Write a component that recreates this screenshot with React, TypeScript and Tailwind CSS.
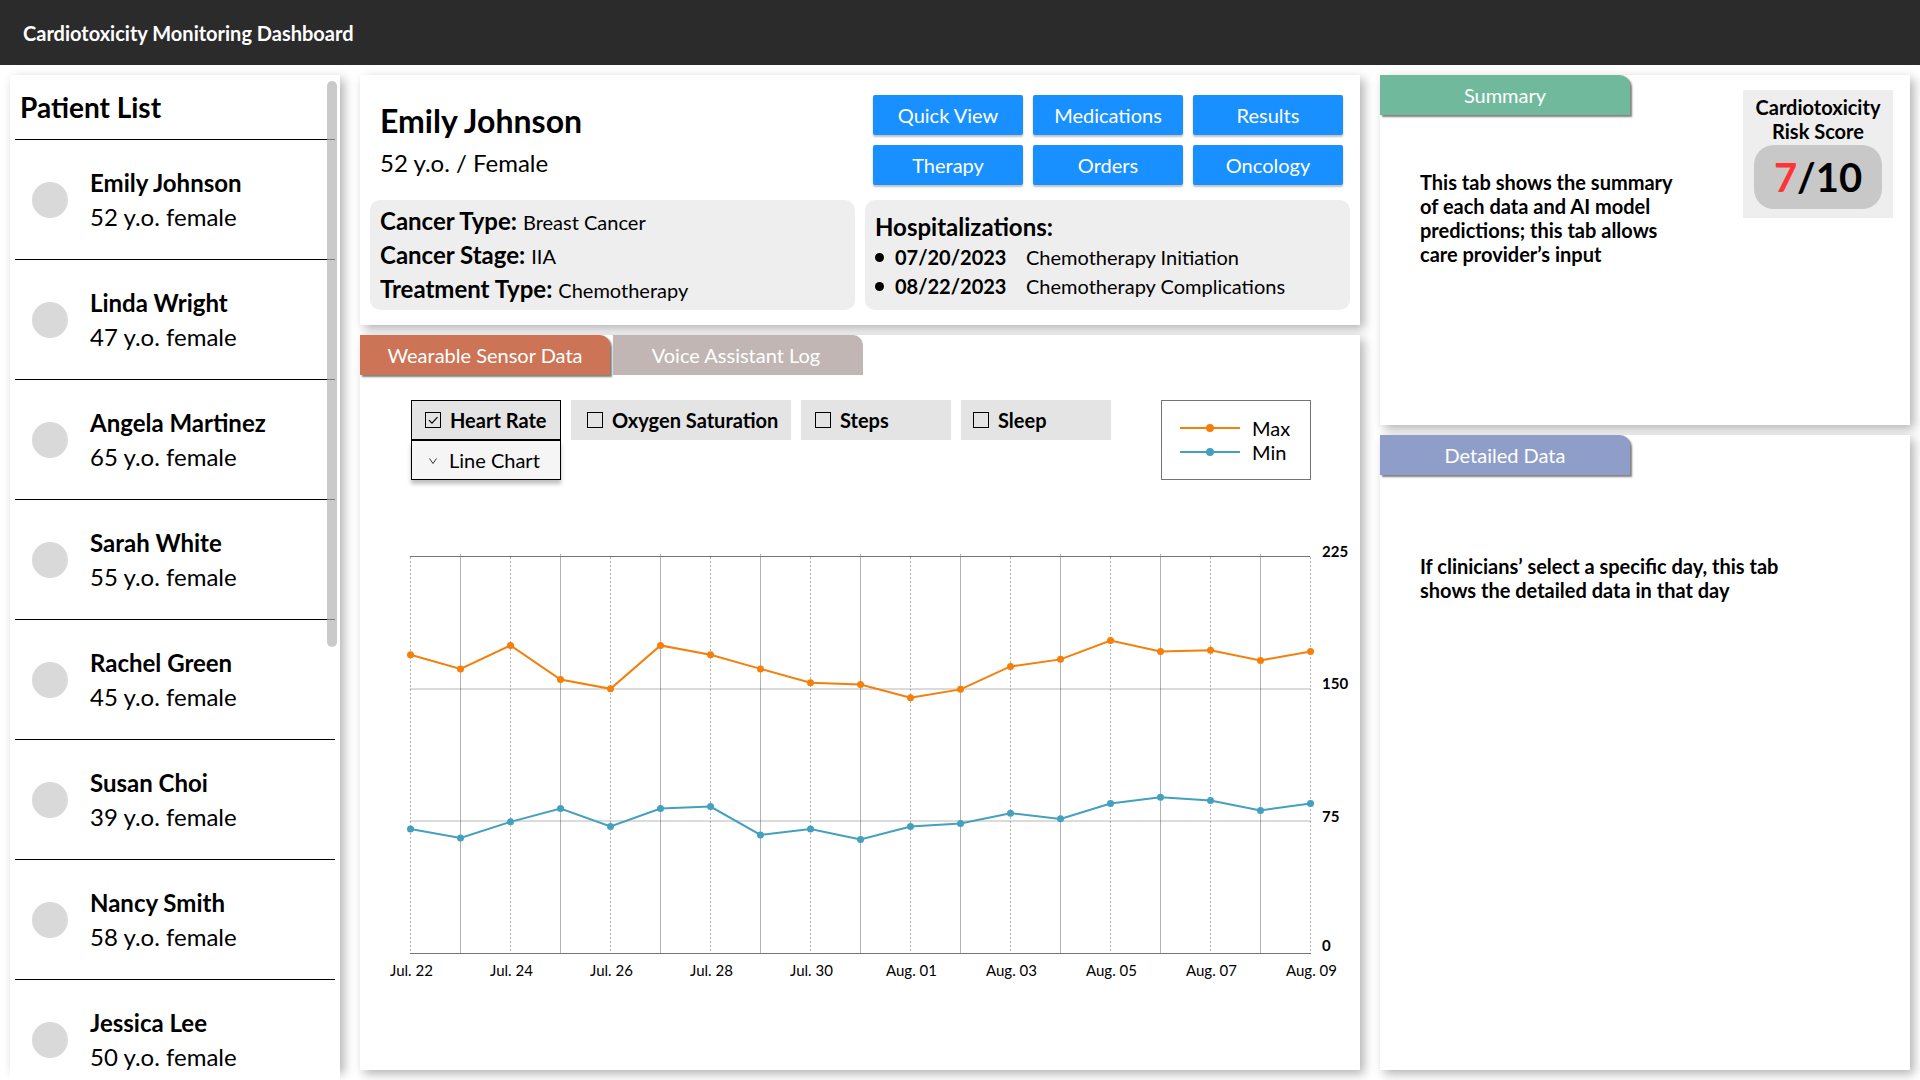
import React, { useState } from 'react';

interface Patient {
  name: string;
  age: number;
}

const patients: Patient[] = [
  { name: 'Emily Johnson', age: 52 },
  { name: 'Linda Wright', age: 47 },
  { name: 'Angela Martinez', age: 65 },
  { name: 'Sarah White', age: 55 },
  { name: 'Rachel Green', age: 45 },
  { name: 'Susan Choi', age: 39 },
  { name: 'Nancy Smith', age: 58 },
  { name: 'Jessica Lee', age: 50 },
];

const actions = ['Quick View', 'Medications', 'Results', 'Therapy', 'Orders', 'Oncology'];

const diagnosis = [
  { label: 'Cancer Type:', value: 'Breast Cancer' },
  { label: 'Cancer Stage:', value: 'IIA' },
  { label: 'Treatment Type:', value: 'Chemotherapy' },
];

const hospitalizations = [
  { date: '07/20/2023', reason: 'Chemotherapy Initiation' },
  { date: '08/22/2023', reason: 'Chemotherapy Complications' },
];

const sensors = [
  { name: 'Heart Rate', width: 'w-[150px] pl-3.5' },
  { name: 'Oxygen Saturation', width: 'w-[220px] pl-4' },
  { name: 'Steps', width: 'w-[150px] pl-3.5' },
  { name: 'Sleep', width: 'w-[150px] pl-3' },
];

const maxRate = [
  169.3, 161.3, 174.6, 155.3, 150, 174.6, 169.3, 161.3, 153.4, 152.5, 144.9, 149.7, 162.7, 166.7,
  177.4, 171.2, 171.8, 166.1, 171.2,
];
const minRate = [
  70.6, 65.5, 74.6, 82.2, 72, 82.2, 83.3, 67.2, 70.6, 64.6, 72, 73.7, 79.5, 76.3, 85, 88.6, 86.7,
  81.1, 85,
];
const days = [
  'Jul. 22', 'Jul. 24', 'Jul. 26', 'Jul. 28', 'Jul. 30',
  'Aug. 01', 'Aug. 03', 'Aug. 05', 'Aug. 07', 'Aug. 09',
];

const panel = 'bg-white shadow-[4px_4px_10px_rgba(0,0,0,0.3)]';
const tab = 'h-10 w-[250px] rounded-tr-[10px] text-xl text-white';
const raised = 'shadow-[2px_2px_2px_rgba(0,0,0,0.5)]';

// chart geometry, in viewBox units
const LEFT = 50.5;
const STEP = 50;
const TOP = 16.5;
const BOTTOM = 413.5;
const toX = (i: number) => LEFT + i * STEP;
const toY = (v: number) => BOTTOM - (v / 225) * (BOTTOM - TOP);

const Series: React.FC<{ values: number[]; color: string }> = ({ values, color }) => (
  <g fill={color}>
    <polyline
      points={values.map((v, i) => `${toX(i)},${toY(v)}`).join(' ')}
      fill="none"
      stroke={color}
      strokeWidth="2"
    />
    {values.map((v, i) => (
      <circle key={i} cx={toX(i)} cy={toY(v)} r="3.5" />
    ))}
  </g>
);

const HeartRateChart: React.FC = () => (
  <svg viewBox="0 0 1000 450" className="mt-[60px] w-full" role="img" aria-label="Heart rate by day">
    {maxRate.map((_, i) => (
      <line
        key={i}
        x1={toX(i)}
        x2={toX(i)}
        y1={i % 2 ? 14 : 17}
        y2="413"
        stroke="#b3b3b3"
        strokeDasharray={i % 2 ? undefined : '2 2'}
      />
    ))}
    <g stroke="#000" strokeOpacity="0.14" strokeWidth="2">
      <line x1="50" x2="951" y1="149" y2="149" />
      <line x1="50" x2="951" y1="281" y2="281" />
    </g>
    <g stroke="#757575">
      <line x1="50" x2="950" y1={TOP} y2={TOP} />
      <line x1="50" x2="951" y1={BOTTOM} y2={BOTTOM} />
    </g>
    <Series values={maxRate} color="#f57f0b" />
    <Series values={minRate} color="#43a0be" />
    <g fontSize="15" fontWeight="700">
      <text x="962" y="17">225</text>
      <text x="962" y="149">150</text>
      <text x="962" y="282">75</text>
      <text x="962" y="411">0</text>
    </g>
    <g fontSize="15" textAnchor="middle">
      {days.map((day, i) => (
        <text key={day} x={51.5 + i * 100} y="436">
          {day}
        </text>
      ))}
    </g>
  </svg>
);

const LegendRow: React.FC<{ label: string; color: string }> = ({ label, color }) => (
  <div className="flex h-6 items-center gap-3">
    <svg width="60" height="8" className="shrink-0">
      <line x1="0" x2="60" y1="4" y2="4" stroke={color} strokeWidth="2" />
      <circle cx="30" cy="4" r="4" fill={color} />
    </svg>
    {label}
  </div>
);

// The list is longer than its card and runs on past the bottom of the window.
const PatientList: React.FC = () => (
  <aside className={`${panel} relative mb-2.5 min-h-0`}>
    <div className="bg-white px-[5px]">
      <h2 className="h-16 pt-[15px] pl-[5px] text-[28px] leading-[34px] font-bold">Patient List</h2>
      <ul>
        {patients.map((p) => (
          <li key={p.name} className="flex h-[120px] items-center gap-[22px] border-t border-black pl-[17px]">
            <span className="size-9 shrink-0 rounded-full bg-[#d9d9d9]" />
            <p className="text-2xl leading-[34px]">
              <span className="block font-bold">{p.name}</span>
              {p.age} y.o. female
            </p>
          </li>
        ))}
      </ul>
    </div>
    <div className="absolute top-1.5 right-[3px] h-[566px] w-2.5 rounded-full bg-[#b5b3b4]/70" />
  </aside>
);

const PatientHeader: React.FC = () => (
  <section className={`${panel} h-[250px] shrink-0 px-2.5`}>
    <div className="flex h-[125px] justify-between pt-5 pr-[7px] pl-2.5">
      <div className="pt-1.5">
        <h1 className="text-[32px] leading-10 font-bold">Emily Johnson</h1>
        <p className="text-2xl leading-[44px]">52 y.o. / Female</p>
      </div>
      <div className="grid h-[90px] grid-cols-[150px_150px_150px] gap-2.5">
        {actions.map((label) => (
          <button
            key={label}
            type="button"
            className="rounded-xs bg-[#1890ff] text-xl text-white shadow-[0_2px_2px_rgba(0,0,0,0.25)]"
          >
            {label}
          </button>
        ))}
      </div>
    </div>
    <div className="grid h-[110px] grid-cols-2 gap-2.5">
      <dl className="rounded-[10px] bg-[#eeeeee] px-2.5 pt-1">
        {diagnosis.map((d) => (
          <div key={d.label} className="flex h-[34px] items-baseline gap-1.5 leading-[34px]">
            <dt className="text-2xl leading-[34px] font-bold">{d.label}</dt>
            <dd className="text-xl leading-[34px]">{d.value}</dd>
          </div>
        ))}
      </dl>
      <div className="rounded-[10px] bg-[#eeeeee] px-2.5 pt-2.5">
        <h2 className="text-2xl leading-[33px] font-bold">Hospitalizations:</h2>
        <ul className="text-xl leading-[29px]">
          {hospitalizations.map((h) => (
            <li key={h.date} className="flex items-center">
              <span className="mr-[11px] size-[9px] rounded-full bg-black" />
              <span className="w-[131px] font-bold">{h.date}</span>
              {h.reason}
            </li>
          ))}
        </ul>
      </div>
    </div>
  </section>
);

const SensorPanel: React.FC = () => {
  const [selected, setSelected] = useState(['Heart Rate']);

  const toggle = (name: string) =>
    setSelected((prev) => (prev.includes(name) ? prev.filter((n) => n !== name) : [...prev, name]));

  return (
    <section className={`${panel} min-h-0 flex-1`}>
      <div className="flex gap-[3px]">
        <button type="button" className={`${tab} ${raised} bg-[#cd7456]`}>
          Wearable Sensor Data
        </button>
        <button type="button" className={`${tab} bg-[#c1b6b4] pr-1`}>
          Voice Assistant Log
        </button>
      </div>
      <div className="mt-[25px] mr-[49px] ml-[51px] flex justify-between text-xl">
        <div className="flex gap-2.5">
          {sensors.map((s) => {
            const on = selected.includes(s.name);
            return (
              <div key={s.name}>
                <label
                  className={`${s.width} flex h-10 items-center gap-[9px] bg-[#e4e4e4] font-bold whitespace-nowrap ${
                    on ? 'outline -outline-offset-1 outline-black' : ''
                  }`}
                >
                  <span className="relative size-4 shrink-0">
                    <input
                      type="checkbox"
                      checked={on}
                      onChange={() => toggle(s.name)}
                      className="block size-4 appearance-none border border-black"
                    />
                    {on && (
                      <svg viewBox="0 0 16 16" className="pointer-events-none absolute inset-0">
                        <path d="M4 8.200l3 3 5.500-6" fill="none" stroke="#000" strokeWidth="1.2" />
                      </svg>
                    )}
                  </span>
                  {s.name}
                </label>
                {s.name === 'Heart Rate' && (
                  <div className="relative">
                    <select
                      aria-label="Chart type"
                      className="block h-10 w-[150px] appearance-none border border-black bg-[#f5f5f5] pl-[37px] shadow-[0_4px_4px_rgba(0,0,0,0.25)]"
                    >
                      <option>Line Chart</option>
                    </select>
                    <svg
                      viewBox="0 0 8 6"
                      className="pointer-events-none absolute top-[18px] left-[18px] h-1.5 w-2"
                    >
                      <path d="M.5 .5l3.500 5 3.500-5" fill="none" stroke="#000" strokeWidth=".8" />
                    </svg>
                  </div>
                )}
              </div>
            );
          })}
        </div>
        <div className="h-20 w-[150px] border border-[#757575] pt-[15px] pl-[18px]">
          <LegendRow label="Max" color="#f57f0b" />
          <LegendRow label="Min" color="#43a0be" />
        </div>
      </div>
      <HeartRateChart />
    </section>
  );
};

const App: React.FC = () => (
  <div className="flex h-screen flex-col overflow-hidden bg-white font-[Lato,sans-serif] text-black">
    <header className="flex h-[65px] shrink-0 items-center bg-[#2b2b2b] px-[23px] text-xl font-bold text-white">
      Cardiotoxicity Monitoring Dashboard
    </header>
    <main className="grid min-h-0 flex-1 grid-cols-[330fr_1000fr_530fr] grid-rows-1 gap-5 px-2.5 pt-2.5">
      <PatientList />
      <div className="flex min-h-0 min-w-0 flex-col gap-2.5 pb-2.5">
        <PatientHeader />
        <SensorPanel />
      </div>
      <div className="flex min-h-0 min-w-0 flex-col gap-2.5 pb-2.5">
        <section className={`${panel} flex h-[350px] shrink-0 justify-between`}>
          <div>
            <button type="button" className={`${tab} ${raised} block bg-[#71b99d]`}>
              Summary
            </button>
            <p className="mt-[55px] ml-10 w-[264px] text-xl leading-6 font-bold">
              This tab shows the summary of each data and AI model predictions; this tab allows care
              provider’s input
            </p>
          </div>
          <div className="mt-[15px] mr-[17px] h-32 w-[150px] bg-[#eeeeee] px-[11px] pt-[5px] text-center">
            <h2 className="text-xl leading-6 font-bold">Cardiotoxicity Risk Score</h2>
            <p className="mt-0.5 h-16 rounded-[20px] bg-[#c8c8c8] text-[40px] leading-[64px] font-bold">
              <span className="text-[#ff3535]">7</span>/10
            </p>
          </div>
        </section>
        <section className={`${panel} min-h-0 flex-1`}>
          <button type="button" className={`${tab} ${raised} block bg-[#8f9ec9]`}>
            Detailed Data
          </button>
          <p className="mt-[79px] ml-10 w-[380px] text-xl leading-6 font-bold">
            If clinicians’ select a specific day, this tab shows the detailed data in that day
          </p>
        </section>
      </div>
    </main>
  </div>
);

export default App;
